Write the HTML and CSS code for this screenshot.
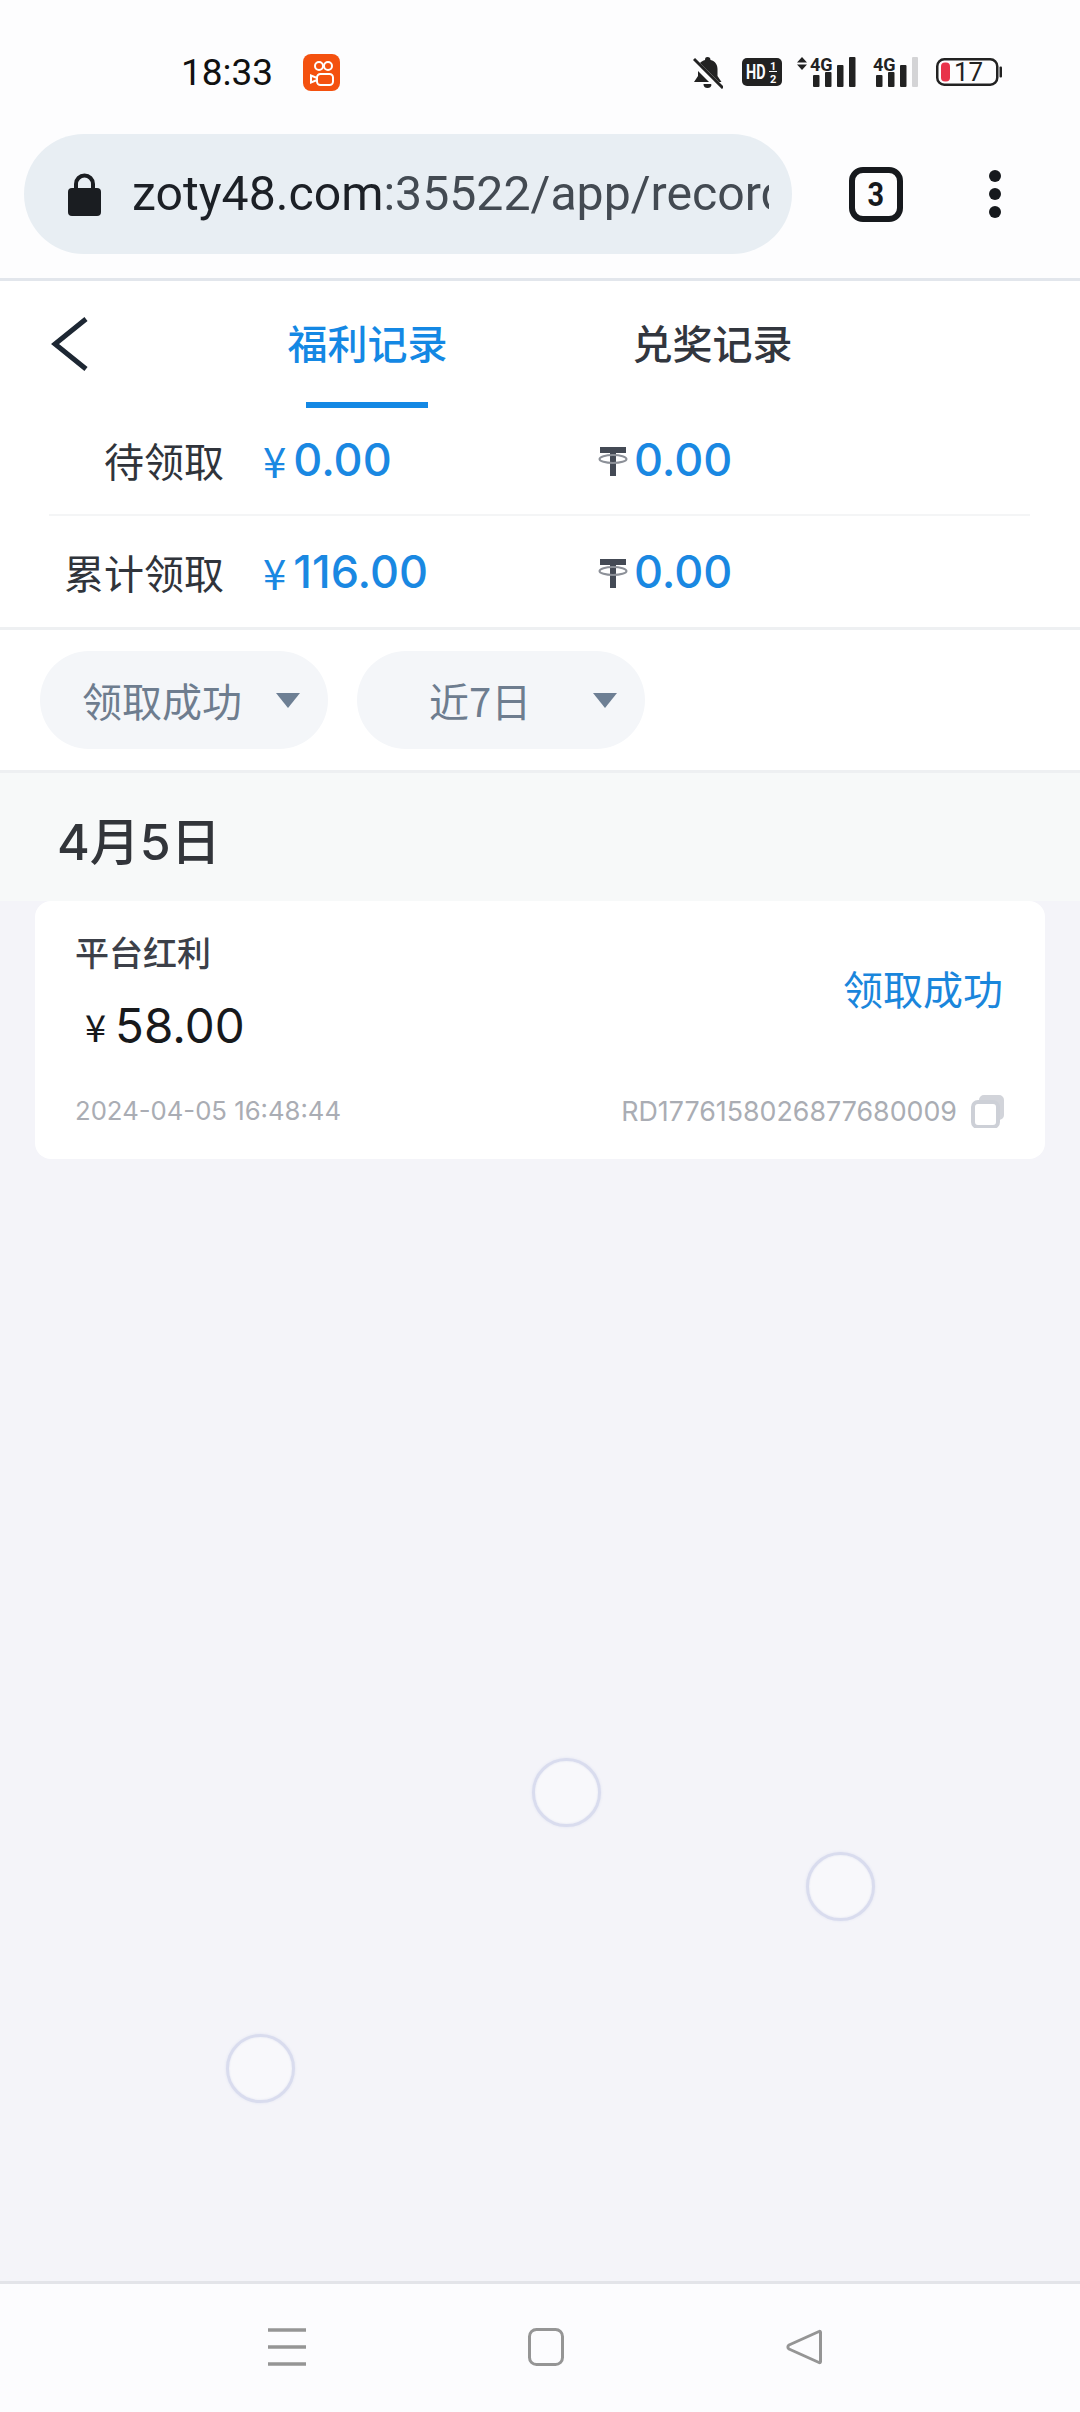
FILE: index.html
```html
<!DOCTYPE html>
<html lang="zh">
<head>
<meta charset="utf-8">
<title>福利记录</title>
<link rel="stylesheet" href="styles.css">
</head>
<body>
<div class="phone">
  <header class="chrome">
    <div class="status">
      <span class="time">18:33</span>
      <svg class="ks" viewBox="0 0 37 37" width="37" height="37">
        <rect width="37" height="37" rx="8" fill="#f4510f"/>
        <g fill="none" stroke="#fff" stroke-width="2">
          <circle cx="16" cy="12" r="4"/><circle cx="25" cy="12" r="4"/>
          <rect x="14" y="20" width="16" height="11" rx="3.500"/>
          <path d="M14 24l-6-2.500v7l6-2.500z"/>
        </g>
      </svg>
      <div class="sys">
        <svg class="bell" viewBox="0 0 30 33" width="30" height="33">
          <path d="M14.500 1c2 0 3 1 3 3 5 1 7 5 7 9v7l4 6H1l4-6v-7c0-5 3-8 7-9 0-2 .5-3 2.500-3z" fill="#222"/>
          <path d="M10.500 28h8a4 4 0 0 1-8 0z" fill="#222"/>
          <path d="M0 5l27 27" stroke="#fdfdfe" stroke-width="7"/>
          <path d="M1 3l29 29" stroke="#222" stroke-width="3"/>
        </svg>
        <svg class="hd" viewBox="0 0 40 28" width="40" height="28">
          <rect width="40" height="28" rx="5" fill="#222"/>
          <text transform="translate(4 21) scale(.72 1)" class="hdt">HD</text>
          <text x="28" y="12" class="hds">1</text>
          <text x="28" y="25" class="hds">2</text>
          <path d="M27 13.500h8" stroke="#fdfdfe" stroke-width="1"/>
        </svg>
        <svg class="sig" viewBox="0 -4 59 38" width="59" height="38">
          <path d="M5 0l5 5.500H0zM5 13l5-5.500H0z" fill="#222"/>
          <text x="13" y="13.500" class="g4">4G</text>
          <g fill="#222"><rect x="16" y="18" width="6.500" height="12" rx="1"/><rect x="28" y="15" width="6.500" height="15" rx="1"/><rect x="40" y="8" width="6.500" height="22" rx="1"/><rect x="52" y="0" width="6.500" height="30" rx="1"/></g>
        </svg>
        <svg class="sig2" viewBox="0 -4 45 38" width="45" height="38">
          <text x="0" y="13.500" class="g4">4G</text>
          <g fill="#222"><rect x="3" y="18" width="6.500" height="12" rx="1"/><rect x="15" y="15" width="6.500" height="15" rx="1"/><rect x="27" y="8" width="6.500" height="22" rx="1"/></g>
          <rect x="39" y="0" width="6" height="30" rx="1" fill="#d4d4d6"/>
        </svg>
        <svg class="batt" viewBox="0 0 66 28" width="66" height="28">
          <rect x="1.250" y="1.250" width="60" height="25.500" rx="7" fill="none" stroke="#222" stroke-width="2.500"/>
          <rect x="5" y="4.500" width="9" height="19" rx="4" fill="#e8334a"/>
          <text x="18" y="23" class="bt">17</text>
          <rect x="63.500" y="8.500" width="2.500" height="11" rx="1" fill="#222"/>
        </svg>
      </div>
    </div>
    <div class="toolbar">
      <div class="pill">
        <svg viewBox="0 0 33 44" width="33" height="44" class="lock">
          <path d="M8 18v-6a8.500 8.500 0 0 1 17 0v6" fill="none" stroke="#1a1d21" stroke-width="4"/>
          <rect y="16" width="33" height="28" rx="4" fill="#1a1d21"/>
        </svg>
        <div class="url"><span class="host">zoty48.com</span>:35522/app/record</div>
      </div>
      <div class="tabcount"><span>3</span></div>
      <div class="dots"><i></i><i></i><i></i></div>
    </div>
  </header>

  <main class="page">
    <section class="top">
      <nav class="tabs">
        <div class="back">
          <svg viewBox="0 0 38 54" width="38" height="54"><path d="M36 2L5 27l31 25" fill="none" stroke="#1d2733" stroke-width="5"/></svg>
        </div>
        <div class="tab on"><span>福利记录</span></div>
        <div class="tab"><span>兑奖记录</span></div>
      </nav>
      <div class="sumrow">
        <div class="lab">待领取</div>
        <div class="cell"><span class="yen">¥</span><span class="num">0.00</span></div>
        <div class="cell usdt">
          <svg viewBox="0 0 30 32" width="30" height="32"><path d="M2 3h26v6H18v23h-6V9H2z" fill="#444a55"/><ellipse cx="15" cy="15" rx="13.500" ry="4" fill="none" stroke="#8c9098" stroke-width="2"/></svg>
          <span class="num">0.00</span>
        </div>
      </div>
      <div class="sumrow">
        <div class="lab">累计领取</div>
        <div class="cell"><span class="yen">¥</span><span class="num">116.00</span></div>
        <div class="cell usdt">
          <svg viewBox="0 0 30 32" width="30" height="32"><path d="M2 3h26v6H18v23h-6V9H2z" fill="#444a55"/><ellipse cx="15" cy="15" rx="13.500" ry="4" fill="none" stroke="#8c9098" stroke-width="2"/></svg>
          <span class="num">0.00</span>
        </div>
      </div>
    </section>

    <section class="filters">
      <div class="select"><span>领取成功</span><i class="caret"></i></div>
      <div class="select short"><span>近7日</span><i class="caret"></i></div>
    </section>

    <h2 class="day">4月5日</h2>

    <article class="card">
      <div class="card-main">
        <div>
          <div class="title">平台红利</div>
          <div class="amount"><span class="cy">¥</span>58.00</div>
        </div>
        <div class="state">领取成功</div>
      </div>
      <div class="card-foot">
        <span>2024-04-05 16:48:44</span>
        <span class="order">RD1776158026877680009
          <svg viewBox="0 0 34 34" width="34" height="34"><path d="M8 6a5 5 0 0 1 5-5h15a5 5 0 0 1 5 5v15a5 5 0 0 1-5 5h-4V8H8z" fill="#d2d4da"/><rect x="2" y="8" width="25" height="25" rx="5" fill="#fff" stroke="#cdd0d7" stroke-width="4"/></svg>
        </span>
      </div>
    </article>

    <div class="bubble b1"></div>
    <div class="bubble b2"></div>
    <div class="bubble b3"></div>
  </main>

  <footer class="navbar">
    <svg viewBox="0 0 38 38" width="38" height="38"><path d="M0 2h38M0 19h38M0 36h38" stroke="#959595" stroke-width="3.500"/></svg>
    <svg viewBox="0 0 36 38" width="36" height="38"><rect x="1.500" y="1.500" width="33" height="35" rx="7" fill="none" stroke="#959595" stroke-width="3"/></svg>
    <svg viewBox="0 0 36 38" width="36" height="38"><path d="M33 3.500c1-.6 1.500 0 1.500 1v29c0 1-.5 1.600-1.500 1L3 21c-1.500-1-1.500-3 0-4z" fill="none" stroke="#959595" stroke-width="3" stroke-linejoin="round"/></svg>
  </footer>
</div>
</body>
</html>
```

FILE: styles.css
```css
* { box-sizing: border-box; }
html, body { margin: 0; padding: 0; }
body { font-family: "Noto Sans", "Noto Sans CJK SC", sans-serif; background: #f4f4f9; }
.phone { width: 1080px; height: 2412px; display: flex; flex-direction: column; overflow: hidden; }

.chrome { height: 281px; background: #fdfdfe; border-bottom: 3px solid #e2e6ec; flex: none; }
.status { height: 134px; display: flex; align-items: center; padding: 10px 78px 0 181px; }
.time { font: 400 37px/1 Roboto, sans-serif; color: #111; width: 122px; }
.sys { margin-left: auto; display: flex; align-items: center; }
.bell { margin-right: 19px; }
.hd { margin-right: 15px; }
.sig { margin-right: 17px; }
.sig2 { margin-right: 18px; }
.hdt { font: 700 20px Roboto, sans-serif; fill: #fdfdfe; }
.hds { font: 700 11px Roboto, sans-serif; fill: #fdfdfe; }
.g4 { font: 700 18px Roboto, sans-serif; fill: #222; }
.bt { font: 400 26px Roboto, sans-serif; fill: #222; }

.toolbar { height: 120px; display: flex; align-items: center; padding-left: 24px; }
.pill { width: 768px; height: 120px; border-radius: 60px; background: #e8eef3; display: flex; align-items: center; padding: 0 23px 0 44px; }
.lock { flex: none; margin-right: 31px; }
.url { font: 400 48.200px/1.3 Roboto, sans-serif; color: #434a52; white-space: nowrap; overflow: hidden; flex: 1; }
.host { color: #1c2026; }
.tabcount { width: 54px; height: 55px; margin-left: 57px; border: 6px solid #16191d; border-radius: 14px; display: flex; align-items: center; justify-content: center; font: 700 34px/1 Roboto, sans-serif; color: #16191d; }
.tabcount span { display: block; transform: scaleX(.85); }
.dots { margin-left: 86px; display: flex; flex-direction: column; gap: 6px; }
.dots i { width: 12px; height: 12px; border-radius: 50%; background: #16191d; }

.page { flex: 1; position: relative; display: flex; flex-direction: column; }
.top { background: #fff; border-bottom: 3px solid #eef0f2; }
.tabs { height: 124px; display: flex; }
.back { width: 195px; padding: 36px 0 0 50px; }
.tab { width: 345px; display: flex; justify-content: center; font: 500 40px/1 "Noto Sans CJK SC", sans-serif; color: #32363e; padding-top: 41px; }
.tab span { height: 100%; }
.tab.on { color: #1488e4; position: relative; }
.tab.on::after { content: ""; position: absolute; left: 111px; bottom: -3px; width: 122px; height: 6px; background: #1488e4; }

.sumrow { height: 111px; margin: 0 50px 0 49px; display: flex; align-items: center; border-bottom: 2px solid #f4f5f6; }
.sumrow:last-child { border-bottom: none; }
.lab { width: 175px; text-align: right; font: 400 40px/1 "Noto Sans CJK SC", sans-serif; color: #30343b; }
.cell { display: flex; align-items: center; color: #1a88e2; }
.cell:nth-child(2) { width: 335px; margin-left: 39px; }
.yen { font: 400 42px/1 "Noto Sans CJK SC", sans-serif; margin-right: 7px; }
.num { font: 500 45px/1 Inter, sans-serif; }
.usdt svg { margin-right: 6px; }

.filters { height: 143px; flex: none; background: #fff; border-bottom: 3px solid #eef0f2; display: flex; align-items: center; gap: 29px; padding-left: 40px; }
.select { width: 288px; height: 98px; border-radius: 49px; background: #f4f6f9; display: flex; align-items: center; padding-left: 42px; font: 400 40px/1 "Noto Sans CJK SC", sans-serif; color: #6e7d8f; position: relative; }
.select.short { padding-left: 72px; }
.caret { position: absolute; right: 28px; top: 42px; width: 0; height: 0; border-left: 12.500px solid transparent; border-right: 12.500px solid transparent; border-top: 15px solid #6d7f94; }

.day { margin: 0; height: 128px; flex: none; background: #f7f9f9; padding: 10px 0 0 57px; display: flex; align-items: center; font: 500 50px/1 Inter, "Noto Sans CJK SC", sans-serif; color: #32353a; }

.card { margin: 0 35px; height: 258px; background: #fff; border-radius: 16px; padding: 27px 40px 0; display: flex; flex-direction: column; flex: none; }
.card-main { display: flex; justify-content: space-between; align-items: flex-start; height: 150px; }
.title { font: 500 34px/48px "Noto Sans CJK SC", sans-serif; color: #3c4049; }
.amount { font: 400 47.500px/1 Inter, sans-serif; color: #17191c; margin-top: 26px; padding-left: 10px; display: flex; align-items: center; }
.cy { font: 400 38px/1 "Noto Sans CJK SC", sans-serif; margin-right: 9px; }
.state { font: 400 40px/1 "Noto Sans CJK SC", sans-serif; color: #1a86dc; align-self: center; margin: -30px 2px 0 0; }
.card-foot { display: flex; justify-content: space-between; align-items: center; font: 400 25.700px/1 Inter, sans-serif; color: #aaadb4; margin-top: 16px; }
.order { display: flex; align-items: center; gap: 14px; font-size: 26.800px; }

.bubble { position: absolute; width: 69px; height: 69px; border-radius: 50%; background: #f8f8fb; border: 3px solid #d9dcee; box-shadow: 0 0 3px #dfe2f1, inset 0 0 2px #e2e5f2; }
.b1 { left: 532px; top: 1477px; }
.b2 { left: 806px; top: 1571px; }
.b3 { left: 226px; top: 1753px; }

.navbar { height: 131px; flex: none; background: #fcfcfe; border-top: 3px solid #e3e4e9; display: flex; align-items: center; padding: 0 0 3px 268px; gap: 222px; }
```
